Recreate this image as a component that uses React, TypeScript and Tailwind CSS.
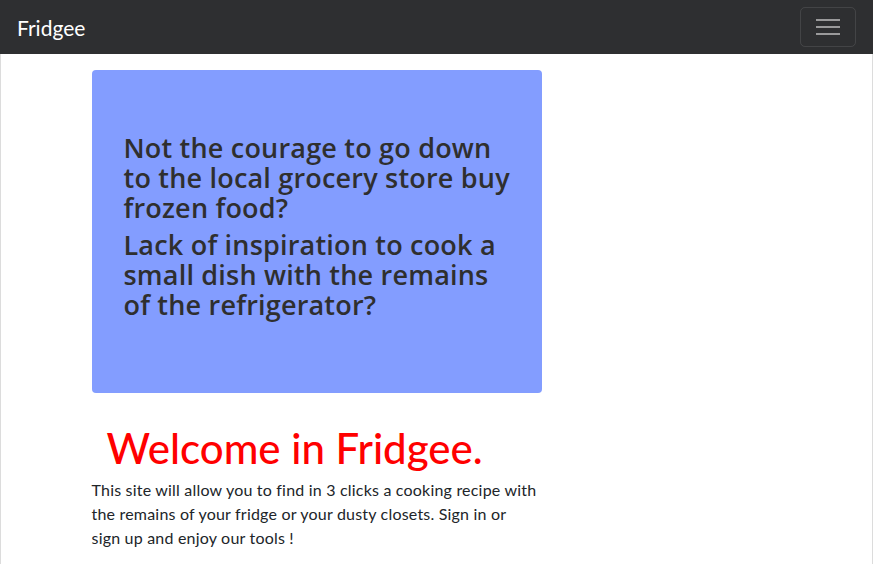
import React from 'react';

export default function App() {
    return (
        <div className="min-h-[564px] bg-white font-['Lato','Open_Sans',sans-serif] text-[#212529]">
            <nav className="h-[54px] bg-[#2e2f31] flex items-center justify-between pl-[17px] pr-[17px]">
                <a href="#" className="text-white text-[21px] leading-none">Fridgee</a>
                <button className="w-[56px] h-[40px] border border-white/10 rounded-[5px] flex flex-col items-center justify-center gap-[5px]">
                    <span className="block w-[24px] h-[2px] bg-[#9a9a9b]"></span>
                    <span className="block w-[24px] h-[2px] bg-[#9a9a9b]"></span>
                    <span className="block w-[24px] h-[2px] bg-[#9a9a9b]"></span>
                </button>
            </nav>

            <main className="min-h-[510px] border-x border-[#dcdcdc]">
                <div className="w-[720px] mx-auto px-[15px] pt-[16px]">
                    <div className="w-[450px]">
                        <div className="bg-[#839dff] rounded-[4px] h-[323px] flex flex-col justify-center px-[32px] pb-[10px] font-['Open_Sans',sans-serif]">
                            <h3 className="text-[27px] leading-[30px] text-[#2f2f2f] font-semibold tracking-[0.2px] whitespace-nowrap">
                                Not the courage to go down<br />
                                to the local grocery store buy<br />
                                frozen food?
                            </h3>
                            <h3 className="text-[27px] leading-[30px] text-[#2f2f2f] font-semibold tracking-[0.2px] whitespace-nowrap mt-[7px]">
                                Lack of inspiration to cook a<br />
                                small dish with the remains<br />
                                of the refrigerator?
                            </h3>
                        </div>

                        <h1 className="text-[#ff0000] text-[42px] leading-[50px] font-medium ml-[15px] mt-[30px]">
                            Welcome in Fridgee.
                        </h1>
                        <p className="text-[16px] leading-[24px] tracking-[0.2px] mt-[5px]">
                            This site will allow you to find in 3 clicks a cooking recipe with<br />
                            the remains of your fridge or your dusty closets. Sign in or<br />
                            sign up and enjoy our tools !
                        </p>
                    </div>
                </div>
            </main>
        </div>
    );
}
